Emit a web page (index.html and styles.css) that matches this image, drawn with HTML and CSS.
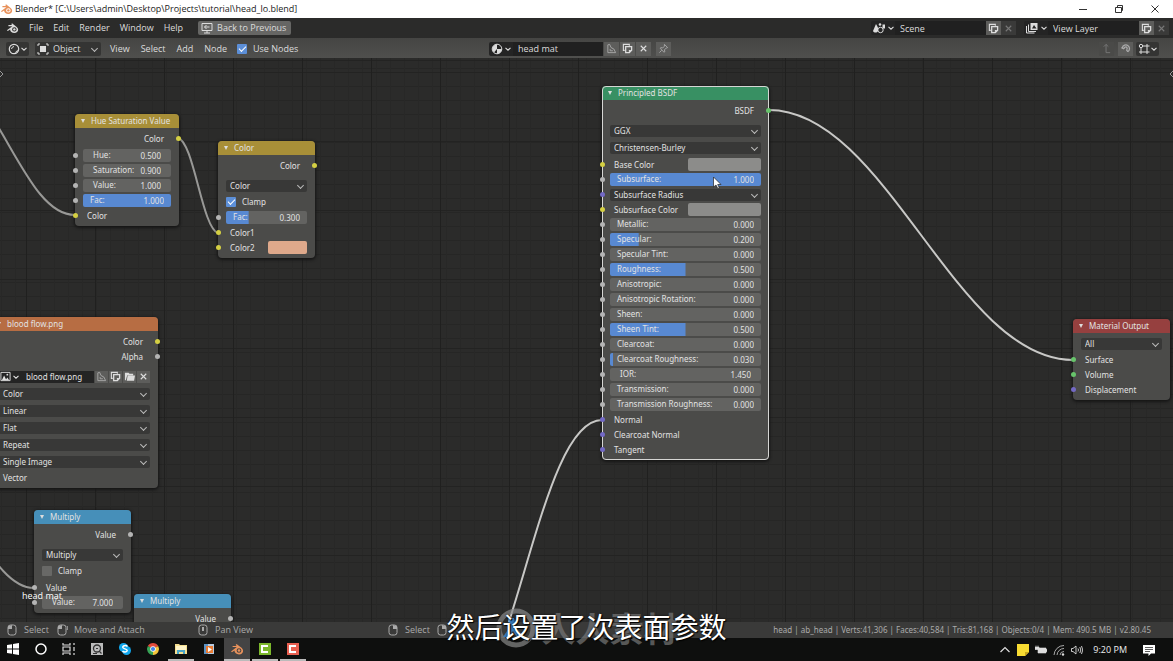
FILE: index.html
```html
<!DOCTYPE html>
<html lang="en">
<head>
<meta charset="utf-8">
<title>Blender* [C:\Users\admin\Desktop\Projects\tutorial\head_lo.blend]</title>
<link rel="stylesheet" href="styles.css">
</head>
<body>
<svg class="defs" aria-hidden="true">
  <symbol id="blender" viewBox="0 0 14 12"><path d="M1 8.500 6.800 4H2.600V2.900h4.200L5.600 1.900 6.500 1l5.300 4.100C14.600 8 12.500 11.500 9 11.500c-2.600 0-4.500-1.700-4.600-3.900L2 9.300zM9 5.200a2.400 2.300 0 1 0 0 4.600 2.400 2.300 0 0 0 0-4.600z" fill="currentColor" fill-rule="evenodd"/><circle cx="9" cy="7.500" r="1.300" fill="currentColor"/></symbol>
  <symbol id="chev" viewBox="0 0 8 8"><path d="M1.500 2.800 4 5.200 6.500 2.800" fill="none" stroke="currentColor" stroke-width="1.100"/></symbol>
  <symbol id="copy" viewBox="0 0 12 12"><path d="M3 8H1.500V1.500H8V3" fill="none" stroke="currentColor" stroke-width="1.200"/><path d="M4 4h6.500v4L8 10.500H4z" fill="none" stroke="currentColor" stroke-width="1.400"/><path d="M10.500 7.500 7.500 10.500v-3z" fill="currentColor"/></symbol>
  <symbol id="cross" viewBox="0 0 12 12"><path d="m3 3 6 6M9 3 3 9" fill="none" stroke="currentColor" stroke-width="1.200"/></symbol>
  <symbol id="fake" viewBox="0 0 12 12"><path d="M2 10.500V2l2-.500 1.500 3.500 3 1.500 2 4zM4.500 6.500v2h3" fill="none" stroke="currentColor"/></symbol>
  <symbol id="folder" viewBox="0 0 12 12"><path d="M1 2h4l1 1h4v1.500H3.500L2 10H1zM4 5h8l-1 5.500H3z" fill="currentColor"/></symbol>
  <symbol id="mouse" viewBox="0 0 12 12"><rect x="2" y="1" width="8" height="10" rx="2.500" fill="none" stroke="currentColor"/></symbol>
</svg>

<header class="titlebar">
  <svg class="logo orange"><use href="#blender"/></svg>
  <h1>Blender* [C:\Users\admin\Desktop\Projects\tutorial\head_lo.blend]</h1>
  <div class="winbuttons">
    <button aria-label="Minimize"><svg viewBox="0 0 10 10"><path d="M1 5.500h8"/></svg></button>
    <button aria-label="Restore"><svg viewBox="0 0 10 10"><path d="M1.500 3.500h6v5h-6zM3.500 3.500v-2h5v5h-1"/></svg></button>
    <button aria-label="Close"><svg viewBox="0 0 10 10"><path d="m1.500 1.500 7 7M8.500 1.500l-7 7"/></svg></button>
  </div>
</header>

<nav class="topbar">
  <svg class="logo"><use href="#blender"/></svg>
  <div class="menus">
    <button>File</button><button>Edit</button><button>Render</button><button>Window</button><button>Help</button>
  </div>
  <button class="back"><svg viewBox="0 0 12 12"><path d="M1 1.500h10v7H1zM3 11h6M6 8.500V11M8.500 5H3.500M5.500 3l-2 2 2 2" fill="none" stroke="currentColor"/></svg>Back to Previous</button>
  <div class="idblock push">
    <button class="idpick" aria-label="Scene"><svg viewBox="0 0 14 12"><path d="M1 9 4 2l2 3.500V9c-1 2-4 2-5 0z" fill="currentColor"/><circle cx="8" cy="2.500" r="1.300" fill="currentColor"/><circle cx="8.500" cy="8" r="2.700" fill="none" stroke="currentColor"/><path d="M10.500 2.500h2.500v4h-2.500z" fill="currentColor"/></svg><svg class="chev"><use href="#chev"/></svg></button>
    <input type="text" value="Scene" aria-label="Scene name">
    <button class="sq" aria-label="New scene"><svg><use href="#copy"/></svg></button><button class="sq off" aria-label="Delete scene"><svg><use href="#cross"/></svg></button>
  </div>
  <div class="idblock">
    <button class="idpick" aria-label="View layer"><svg viewBox="0 0 14 12"><path d="M1.500 4v7h8M3.500 2.500v7H11" fill="none" stroke="currentColor"/><path d="M5.500 1h7v7h-7zM7 6.500h4.500L9 3z" fill="currentColor" fill-rule="evenodd"/></svg><svg class="chev"><use href="#chev"/></svg></button>
    <input type="text" value="View Layer" aria-label="View layer name">
    <button class="sq" aria-label="New view layer"><svg><use href="#copy"/></svg></button><button class="sq off" aria-label="Delete view layer"><svg><use href="#cross"/></svg></button>
  </div>
</nav>

<div class="editorbar">
  <div class="shader">
    <button class="editor" aria-label="Editor type"><svg viewBox="0 0 12 12"><circle cx="6" cy="6" r="4.700" fill="none" stroke="currentColor" stroke-width="1.200"/><path d="M3.500 6A3 3 0 0 1 6 3.500" fill="none" stroke="currentColor"/><path d="M10 6.500A4 4 0 0 1 6.500 10z" fill="currentColor"/></svg><svg class="chev"><use href="#chev"/></svg></button>
    <label class="mode"><svg viewBox="0 0 12 12"><path d="M3 3h6v6H3z" fill="currentColor"/><path d="M1 3V1h2M9 1h2v2M11 9v2H9M3 11H1V9" fill="none" stroke="currentColor"/></svg><span class="pick"><select aria-label="Shader type"><option>Object</option></select></span></label>
    <div class="menus"><button>View</button><button>Select</button><button>Add</button><button>Node</button></div>
    <label class="check"><input type="checkbox" checked>Use Nodes</label>
  </div>
  <div class="material">
    <button class="idpick" aria-label="Material"><svg viewBox="0 0 12 12"><circle cx="6" cy="6" r="4.800" fill="none" stroke="currentColor"/><path d="M6 1.200V6L3 9.500A4.800 4.800 0 0 1 6 1.200zM6 6h4.800A4.800 4.800 0 0 1 6 10.800z" fill="currentColor"/></svg><svg class="chev"><use href="#chev"/></svg></button>
    <input type="text" value="head mat" aria-label="Material name">
    <button class="sq dim" aria-label="Fake user"><svg><use href="#fake"/></svg></button><button class="sq" aria-label="New material"><svg><use href="#copy"/></svg></button><button class="sq" aria-label="Unlink"><svg><use href="#cross"/></svg></button>
  </div>
  <button class="sq dim" aria-label="Pin"><svg viewBox="0 0 12 12"><path d="m7 1.500 3.500 3.500-1.500.500-2 2 .500 2-1 .500L2.500 6l.500-1 2 .500 2-2zM4 8l-2.500 2.500" fill="none" stroke="currentColor"/></svg></button>
  <div class="snap push">
    <button class="sq flat" aria-label="Parent"><svg viewBox="0 0 12 12"><path d="M3 4l2.500-2.500L8 4M5.500 1.500v9H10" fill="none" stroke="currentColor"/></svg></button>
    <button class="sq dim" aria-label="Snap"><svg viewBox="0 0 12 12"><path d="M2.500 5a4 4 0 1 1 6 4.500M4.500 6.500a1.700 1.700 0 1 1 2.500 1M1.500 5l3 1.500M8.500 9.500 7 7.500" fill="none" stroke="currentColor" stroke-width="1.400"/></svg></button>
    <button class="snapto" aria-label="Snap to"><svg viewBox="0 0 12 12"><circle cx="3" cy="3" r="1.700" fill="none" stroke="currentColor"/><path d="M5 3h6.500M9 1v10M3 5v6M1 9h10.500" fill="none" stroke="currentColor"/></svg><svg class="chev"><use href="#chev"/></svg></button>
  </div>
</div>

<main class="canvas">
  <svg class="wires">
    <path d="M-26 32C14 85 36 157 75 157"/>
    <path d="M178 80C194 84 202 170 218 175"/>
    <path d="M-26 472C-6 504 12 530 34 530"/>
    <path class="hot" d="M769 52C886 52 956 302 1073 302"/>
    <path class="hot" d="M506 573C536 482 560 362 602 362"/>
  </svg>

  <section class="node hsv">
    <h2 class="yellow">Hue Saturation Value</h2>
    <div class="row out y">Color</div>
    <div class="group near">
      <div class="row in g"><label class="num wide">Hue:<input type="text" value="0.500"></label></div>
      <div class="row in g"><label class="num wide">Saturation:<input type="text" value="0.900"></label></div>
      <div class="row in g"><label class="num wide">Value:<input type="text" value="1.000"></label></div>
      <div class="row in g"><label class="num" style="--fill:100%">Fac:<input type="text" value="1.000"></label></div>
      <div class="row in y">Color</div>
    </div>
  </section>

  <section class="node mix">
    <h2 class="yellow">Color</h2>
    <div class="row out y">Color</div>
    <div class="group">
      <div class="row tall"><span class="pick"><select aria-label="Blend type"><option>Color</option></select></span></div>
      <div class="row"><label class="check"><input type="checkbox" checked>Clamp</label></div>
    </div>
    <div class="group tight">
      <div class="row in g"><label class="num" style="--fill:28%">Fac:<input type="text" value="0.300"></label></div>
      <div class="row in y">Color1</div>
      <div class="row in y">Color2<button class="swatch peach" aria-label="Color2 value"></button></div>
    </div>
  </section>

  <section class="node image">
    <h2 class="brown">blood flow.png</h2>
    <div class="row out y">Color</div>
    <div class="row out g">Alpha</div>
    <div class="group">
      <div class="row tall idrow">
        <button class="idpick" aria-label="Image"><svg viewBox="0 0 12 12"><path d="M1 1.500h10v9H1z" fill="none" stroke="currentColor"/><path d="M2 10l2.500-5L7 10zM6 10l2-3 2 3z" fill="currentColor"/><circle cx="8" cy="4" r="1" fill="currentColor"/></svg><svg class="chev"><use href="#chev"/></svg></button>
        <input type="text" value="blood flow.png" aria-label="Image name">
        <button class="sq dim" aria-label="Fake user"><svg><use href="#fake"/></svg></button><button class="sq" aria-label="New image"><svg><use href="#copy"/></svg></button><button class="sq" aria-label="Open image"><svg><use href="#folder"/></svg></button><button class="sq" aria-label="Unlink image"><svg><use href="#cross"/></svg></button>
      </div>
      <div class="row tall"><span class="pick"><select aria-label="Color space"><option>Color</option></select></span></div>
      <div class="row tall"><span class="pick"><select aria-label="Interpolation"><option>Linear</option></select></span></div>
      <div class="row tall"><span class="pick"><select aria-label="Projection"><option>Flat</option></select></span></div>
      <div class="row tall"><span class="pick"><select aria-label="Extension"><option>Repeat</option></select></span></div>
      <div class="row tall"><span class="pick"><select aria-label="Source"><option>Single Image</option></select></span></div>
      <div class="row in v">Vector</div>
    </div>
  </section>

  <section class="node mul">
    <h2 class="blue">Multiply</h2>
    <div class="row out g">Value</div>
    <div class="group">
      <div class="row tall"><span class="pick"><select aria-label="Operation"><option>Multiply</option></select></span></div>
      <div class="row"><label class="check"><input type="checkbox">Clamp</label></div>
    </div>
    <div class="group near">
      <div class="row in g">Value</div>
      <div class="row in g"><label class="num wide">Value:<input type="text" value="7.000"></label></div>
    </div>
  </section>

  <section class="node mul2">
    <h2 class="blue">Multiply</h2>
    <div class="row out g">Value</div>
    <div class="group"><div class="row tall"></div></div>
  </section>

  <section class="node bsdf">
    <h2 class="green">Principled BSDF</h2>
    <div class="row out s">BSDF</div>
    <div class="group">
      <div class="row tall"><span class="pick"><select aria-label="Distribution"><option>GGX</option></select></span></div>
      <div class="row tall"><span class="pick"><select aria-label="Subsurface method"><option>Christensen-Burley</option></select></span></div>
    </div>
    <div class="group tight">
      <div class="row in y">Base Color<button class="swatch" aria-label="Base Color value"></button></div>
      <div class="row in g"><label class="num" style="--fill:100%">Subsurface:<input type="text" value="1.000"></label></div>
      <div class="row in v"><span class="pick"><select aria-label="Subsurface Radius"><option>Subsurface Radius</option></select></span></div>
      <div class="row in y">Subsurface Color<button class="swatch" aria-label="Subsurface Color value"></button></div>
      <div class="row in g"><label class="num">Metallic:<input type="text" value="0.000"></label></div>
      <div class="row in g"><label class="num" style="--fill:19%">Specular:<input type="text" value="0.200"></label></div>
      <div class="row in g"><label class="num">Specular Tint:<input type="text" value="0.000"></label></div>
      <div class="row in g"><label class="num" style="--fill:50%">Roughness:<input type="text" value="0.500"></label></div>
      <div class="row in g"><label class="num">Anisotropic:<input type="text" value="0.000"></label></div>
      <div class="row in g"><label class="num">Anisotropic Rotation:<input type="text" value="0.000"></label></div>
      <div class="row in g"><label class="num">Sheen:<input type="text" value="0.000"></label></div>
      <div class="row in g"><label class="num" style="--fill:50%">Sheen Tint:<input type="text" value="0.500"></label></div>
      <div class="row in g"><label class="num">Clearcoat:<input type="text" value="0.000"></label></div>
      <div class="row in g"><label class="num" style="--fill:2%">Clearcoat Roughness:<input type="text" value="0.030"></label></div>
      <div class="row in g"><label class="num wide">IOR:<input type="text" value="1.450"></label></div>
      <div class="row in g"><label class="num">Transmission:<input type="text" value="0.000"></label></div>
      <div class="row in g"><label class="num">Transmission Roughness:<input type="text" value="0.000"></label></div>
      <div class="row in v">Normal</div>
      <div class="row in v">Clearcoat Normal</div>
      <div class="row in v">Tangent</div>
    </div>
  </section>

  <section class="node output">
    <h2 class="red">Material Output</h2>
    <div class="row tall"><span class="pick"><select aria-label="Target"><option>All</option></select></span></div>
    <div class="row in s">Surface</div>
    <div class="row in s">Volume</div>
    <div class="row in v">Displacement</div>
  </section>

  <span class="matname">head mat</span>
  <svg class="tab left" viewBox="0 0 6 10"><path d="M1 2l3 3-3 3"/></svg>
  <svg class="tab right" viewBox="0 0 6 10"><path d="M5 2 2 5l3 3"/></svg>
  <svg class="cursor" viewBox="0 0 10 14"><path d="M1.500 1v10l2.500-2 1.800 3.500 1.500-.800L5.700 8.500H9z" fill="#fff" stroke="#222" stroke-width=".700"/></svg>
</main>

<footer class="status">
  <div class="hints">
    <span><svg><use href="#mouse"/><path d="M2 5V2l4-1v4z" fill="currentColor"/></svg>Select</span>
    <span><svg><use href="#mouse"/><path d="M2 5V2l4-1v4z" fill="currentColor"/><path d="m11 2 1 2-1 2" fill="none" stroke="currentColor"/></svg>Move and Attach</span>
    <span><svg><use href="#mouse"/><path d="M5 3h2v4H5z" fill="currentColor"/></svg>Pan View</span>
    <span><svg><use href="#mouse"/><path d="M10 5V2L6 1v4z" fill="currentColor"/></svg>Select</span>
    <span><svg><use href="#mouse"/><path d="M10 5V2L6 1v4z" fill="currentColor"/></svg></span>
  </div>
  <span class="stats">head | ab_head | Verts:41,306 | Faces:40,584 | Tris:81,168 | Objects:0/4 | Mem: 490.5 MB | v2.80.45</span>
</footer>

<footer class="taskbar">
  <div class="apps">
    <button aria-label="Start"><svg viewBox="0 0 14 14"><path d="m1 3 5-.800V6.500H1zM7 2l6-1v5.500H7zM1 7.500h5v4.300L1 11zM7 7.500h6V13l-6-1z" fill="#fff"/></svg></button>
    <button aria-label="Search"><svg viewBox="0 0 14 14"><circle cx="7" cy="7" r="5" fill="none" stroke="#fff" stroke-width="1.500"/></svg></button>
    <button aria-label="Task view"><svg viewBox="0 0 14 14"><path d="M1 1v2h7V1M1 5h7v4H1zM1 13v-2h7v2M12 1v2M12 5v4M12 11v2" fill="none" stroke="#ddd" stroke-width="1.200"/></svg></button>
    <button aria-label="Epic"><svg viewBox="0 0 14 14"><path d="M1 1h12v12H1z" fill="#bbb"/><circle cx="7" cy="6.500" r="3.500" fill="none" stroke="#333" stroke-width="1.300"/><path d="M3 11.500h4M9 9l2.500 2.500M6 6.500h2" stroke="#333" stroke-width="1.200"/></svg></button>
    <button aria-label="Skype"><svg viewBox="0 0 14 14"><circle cx="5.500" cy="5.500" r="4.500" fill="#10a8ef"/><circle cx="8.500" cy="8.500" r="4.500" fill="#10a8ef"/><path d="M9.500 4.500C8 3 4.500 3.500 4.800 5.500 5 7 9.200 6.800 9.200 8.500 9 10.500 5.500 10.300 4.500 9" fill="none" stroke="#fff" stroke-width="1.500"/></svg></button>
    <button aria-label="Chrome"><svg viewBox="0 0 14 14"><path d="M7 7 1.800 4A6 6 0 0 1 12.200 4z" fill="#e14a3b"/><path d="M7 7V13A6 6 0 0 1 1.800 4z" fill="#38a457"/><path d="M7 7l5.200-3A6 6 0 0 1 7 13z" fill="#f4c63d"/><circle cx="7" cy="7" r="2.800" fill="#fff"/><circle cx="7" cy="7" r="2.100" fill="#4484e8"/></svg></button>
    <button class="open" aria-label="Explorer"><svg viewBox="0 0 14 14"><path d="M1 2h4l1 1h7v9H1z" fill="#f5df91"/><path d="M2 4h10v4H2z" fill="#fff5c9"/><path d="M3 12V8h8v4H9v-2H5v2z" fill="#4aa6c9"/></svg></button>
    <button aria-label="Player"><svg viewBox="0 0 14 14"><path d="M2 2h10v10H2z" fill="#b6cbe0"/><path d="M2 2h4v10H2z" fill="#5c93c4"/><path d="M4 4h7v7H4z" fill="#e97c34"/><path d="m6 5 4 2.500L6 10z" fill="#fff"/></svg></button>
    <button class="open active" aria-label="Blender"><svg class="orange" viewBox="0 0 14 14"><use href="#blender" y="1" width="14" height="12"/></svg></button>
    <button class="open" aria-label="Camtasia"><svg viewBox="0 0 14 14"><path d="M1 1h12v12H1z" fill="#7cb82c"/><path d="M10 4H4v6h6" fill="none" stroke="#fff" stroke-width="2"/></svg></button>
    <button class="open" aria-label="Recorder"><svg viewBox="0 0 14 14"><path d="M1 1h12v12H1z" fill="#e95f50"/><path d="M10 4H4v6h6" fill="none" stroke="#fff" stroke-width="2"/></svg></button>
  </div>
  <div class="tray">
    <svg viewBox="0 0 12 12"><path d="m1.500 8 4.500-4.500L10.500 8" fill="none" stroke="#ddd" stroke-width="1.200"/></svg>
    <svg viewBox="0 0 12 12"><path d="M0 0h12v8l-4 4H0z" fill="#f8dc32"/><path d="M12 8H8v4z" fill="#c7a51c"/></svg>
    <svg viewBox="0 0 12 12"><path d="M3 4h8v5H3zM11 5.500h1v2h-1zM0 3h4v2.500H0zM1 1.500v4M3 1.500v4" fill="#ddd" stroke="#ddd" stroke-width=".600"/></svg>
    <svg viewBox="0 0 12 12"><path d="M1 11A10 10 0 0 1 11 1.500M4 11A7 7 0 0 1 11 4.500M7 11a4 4 0 0 1 4-3.500" fill="none" stroke="#aaa"/><circle cx="10" cy="10.500" r="1.200" fill="#ddd"/></svg>
    <svg viewBox="0 0 12 12"><path d="M.500 4.500H2L5 2v8L2 7.500H.500zM7 4.500q1 1.500 0 3M8.800 3q2 3 0 6M10.500 2q2.500 4 0 8" fill="none" stroke="#ddd" stroke-width=".900"/></svg>
    <time>9:20 PM</time>
    <svg viewBox="0 0 12 12"><path d="M0 1h12v8.500H8L5.500 12V9.500H0z" fill="#fff"/><path d="M2 3.500h8M2 5.500h8M2 7.500h5" stroke="#333" stroke-width=".800"/></svg>
  </div>
</footer>

<div class="subtitle" lang="zh-CN">
  <div class="watermark"><svg viewBox="0 0 40 40"><circle cx="20" cy="20" r="17" fill="none" stroke="#888" stroke-width="5"/><path d="M12 10h6l2 9 8 10h-7l-4-6-5 6H7l6-9z" fill="#3a96f0"/></svg><span>人人素材</span></div>
  <p>然后设置了次表面参数</p>
</div>
</body>
</html>
```
FILE: styles.css
```css
* { box-sizing: border-box; }
body {
  margin: 0;
  height: 100vh;
  display: flex;
  flex-direction: column;
  overflow: hidden;
  position: relative;
  background: #2b2b2a;
  color: #dcdcdc;
  font: 9px/12px "Open Sans", "Noto Sans", sans-serif;
}
button, input, select {
  font: inherit;
  color: inherit;
  border: 0;
  margin: 0;
  padding: 0;
  background: none;
}
button { display: inline-flex; align-items: center; justify-content: center; }
svg { width: 12px; height: 12px; flex: none; }
svg.chev { width: 8px; height: 8px; }
.defs { position: absolute; width: 0; height: 0; }
.push { margin-left: auto; }

.titlebar {
  flex: none;
  height: 18px;
  display: flex;
  align-items: center;
  gap: 2px;
  background: #fff;
  color: #222;
}
.titlebar h1 { margin: 0; font: inherit; }
.logo { width: 13px; height: 12px; }
.orange { color: #e8925c; }
.winbuttons { margin-left: auto; display: flex; }
.winbuttons button { width: 36px; height: 16px; }
.winbuttons svg { width: 10px; height: 10px; fill: none; stroke: #333; stroke-width: 1; }

.topbar {
  flex: none;
  height: 20px;
  display: flex;
  align-items: center;
  padding: 0 4px 0 6px;
  background: #2b2b2a;
}
.topbar .menus { margin-left: 10px; gap: 10px; }
.menus { display: flex; gap: 11px; }
.back {
  height: 14px;
  margin-left: 15px;
  padding: 0 5px 0 3px;
  gap: 4px;
  border-radius: 2px;
  background: #666664;
}
.idblock { display: flex; align-items: center; margin-left: 8px; }
.idblock.push { margin-left: auto; }
.idpick { width: 24px; height: 14px; background: #242424; gap: 1px; border-radius: 2px 0 0 2px; }
.idblock .idpick svg:first-child { width: 14px; }
.idblock input, .material input { height: 14px; background: #202020; padding: 0 5px; }
.idblock input { width: 91px; }
.sq { width: 15px; height: 14px; background: #5d5d5b; color: #ddd; margin-left: 1px; }
.sq svg { width: 11px; height: 11px; }
.idblock .sq { margin: 0; }
.sq.off { background: #3a3a39; color: #777; }
.sq.dim { color: #aaa; }
.sq.flat { background: #4a4a48; color: #777; }

.editorbar {
  flex: none;
  height: 20px;
  display: flex;
  align-items: center;
  padding: 1px 14px 0 6px;
  background: linear-gradient(#454543, #4f4f4d);
}
.shader { flex: 0 0 483px; display: flex; align-items: center; }
.editor, .snapto { width: 23px; height: 14px; background: #343433; border-radius: 2px; }
.mode {
  display: flex;
  align-items: center;
  width: 66px;
  height: 14px;
  margin-left: 6px;
  padding-left: 2px;
  background: #343433;
  border-radius: 2px;
}
.editorbar .menus { margin: 0 10px 0 9px; }
.check { display: flex; align-items: center; gap: 6px; }
.check input {
  appearance: none;
  width: 10px;
  height: 10px;
  border-radius: 1px;
  background: #686866;
}
.check input:checked { background: #5c8fd8; }
.check input:checked::before {
  content: "";
  display: block;
  width: 6px;
  height: 3px;
  margin: 2px;
  border: solid #fff;
  border-width: 0 0 1px 1px;
  transform: rotate(-45deg);
}
.material { display: flex; }
.material input { width: 90px; }
.material + .sq { margin-left: 5px; }
.snap { display: flex; gap: 3px; }

.pick { position: relative; flex: 1; display: flex; height: 12px; }
.pick select { appearance: none; width: 100%; padding: 0 4px; background: #383837; border-radius: 2px; }
.mode .pick select { background: none; }
.pick::after {
  content: "";
  position: absolute;
  right: 4px;
  top: 3px;
  width: 4px;
  height: 4px;
  border: solid #bbb;
  border-width: 0 1px 1px 0;
  transform: rotate(45deg);
  pointer-events: none;
}

.canvas {
  flex: 1;
  min-height: 0;
  position: relative;
  overflow: hidden;
  background:
    repeating-linear-gradient(90deg, #20201f 0 1px, transparent 1px 69px) 26px 0,
    repeating-linear-gradient(#232322 0 1px, transparent 1px 69px) 0 14px,
    repeating-linear-gradient(90deg, #282827 0 1px, transparent 1px 14px) 26px 0,
    repeating-linear-gradient(#262625 0 1px, transparent 1px 14px) 0 14px,
    #2b2b2a;
}
.wires { position: absolute; inset: 0; width: 100%; height: 100%; }
.wires path { fill: none; stroke: #989896; stroke-width: 2; }
.wires .hot { stroke: #c8c8c6; }

.node {
  position: absolute;
  padding-bottom: 3px;
  border-radius: 4px;
  background: #4b4b49;
  box-shadow: 0 1px 3px 1px #161616;
  font-family: "Noto Sans", sans-serif;
  font-size: 8px;
  color: #e2e2e2;
}
.node h2 {
  display: flex;
  align-items: center;
  gap: 6px;
  height: 14px;
  margin: 0 0 3px;
  padding-left: 6px;
  border-radius: 4px 4px 0 0;
  font: inherit;
}
.node h2::before {
  content: "";
  border: solid transparent;
  border-width: 4px 2px 0;
  border-top-color: #ddd;
}
.yellow { background: #a88f38; }
.brown { background: #b76d43; }
.blue { background: #468fb9; }
.green { background: #389063; }
.red { background: #96403f; }
.hsv { left: 75px; top: 56px; width: 104px; }
.mix { left: 218px; top: 83px; width: 97px; }
.image { left: -9px; top: 259px; width: 167px; }
.mul { left: 34px; top: 452px; width: 97px; }
.mul2 { left: 134px; top: 536px; width: 97px; }
.bsdf { left: 602px; top: 28px; width: 167px; outline: 1px solid #d6d6d4; outline-offset: -1px; }
.output { left: 1073px; top: 261px; width: 97px; }
.node.output h2 { margin-bottom: 2px; }

.group { padding-top: 4px; }
.group.near { padding-top: 2px; }
.group.tight { padding-top: 1px; }
.row {
  position: relative;
  display: flex;
  align-items: center;
  height: 15px;
  padding: 0 8px;
}
.row.tall { height: 17px; }
.in { padding-left: 12px; }
.in:has(.num), .in:has(.pick) { padding-left: 8px; }
.out { justify-content: flex-end; padding-right: 15px; }
.in::before, .out::after {
  content: "";
  position: absolute;
  z-index: 1;
  top: 5px;
  width: 5px;
  height: 5px;
  border-radius: 50%;
  background: var(--socket);
}
.in::before { left: -2px; }
.out::after { right: -2px; }
.y { --socket: #d4cf43; }
.g { --socket: #b4b4b4; }
.v { --socket: #7369c4; }
.s { --socket: #67c46b; }
.num {
  flex: 1;
  min-width: 0;
  display: flex;
  height: 13px;
  padding: 0 7px;
  border-radius: 2px;
  background: linear-gradient(#5889d2, #5889d2) 0 0 / var(--fill, 0%) 100% no-repeat, #636361;
  white-space: nowrap;
}
.num.wide { padding: 0 10px; }
.num input { flex: 1; min-width: 0; width: 0; text-align: right; }
.swatch { width: 73px; height: 13px; margin-left: auto; border-radius: 2px; background: #8c8c8a; }
.peach { width: 39px; background: #dfa98b; }
.idrow .idpick { width: 22px; height: 12px; }
.idrow .idpick svg:first-child { width: 11px; height: 11px; }
.idrow input { flex: 1; min-width: 0; height: 12px; padding: 0 5px; background: #242424; }
.idrow .sq { width: 13px; height: 12px; }

.matname { position: absolute; left: 22px; top: 532px; font-size: 9px; color: #fff; }
.tab { position: absolute; top: 11px; width: 6px; height: 10px; fill: none; stroke: #999; }
.tab.left { left: -1px; }
.tab.right { right: -1px; }
.cursor { position: absolute; left: 712px; top: 118px; width: 10px; height: 14px; }

.status {
  flex: none;
  height: 16px;
  display: flex;
  align-items: center;
  justify-content: space-between;
  padding: 0 22px 0 6px;
  background: #3a3a39;
  color: #aaa;
}
.hints { display: grid; grid-template-columns: 50px 141px 190px 49px auto; }
.hints span { display: flex; gap: 6px; align-items: center; white-space: nowrap; }
.stats { font-family: "Noto Sans", sans-serif; font-size: 8px; }

.taskbar {
  flex: none;
  height: 23px;
  display: flex;
  justify-content: space-between;
  background: #0e0f0e;
  color: #eee;
}
.apps { display: flex; }
.apps button { width: 26px; margin-right: 2px; height: 23px; border-bottom: 2px solid transparent; }
.apps svg { width: 14px; height: 14px; }
.apps .open { border-color: #bbb; }
.apps .active { background: #444; }
.tray { display: flex; align-items: center; gap: 6px; padding-right: 18px; }
.tray time { margin: 0 10px 0 4px; }

.subtitle {
  position: absolute;
  left: 0;
  right: 0;
  bottom: 15px;
  pointer-events: none;
  text-align: center;
  font-family: "Noto Sans CJK SC", sans-serif;
}
.subtitle p { position: relative; margin: 0; font-size: 28px; line-height: 40px; color: #fff; text-shadow: 0 0 2px #000, 1px 1px 1px #000; }
.watermark {
  position: absolute;
  inset: 4px 0 0;
  display: flex;
  align-items: center;
  justify-content: center;
  gap: 6px;
  opacity: .7;
  color: #777;
  font-size: 34px;
  font-weight: 700;
  line-height: 40px;
}
.watermark svg { width: 40px; height: 40px; }
```
